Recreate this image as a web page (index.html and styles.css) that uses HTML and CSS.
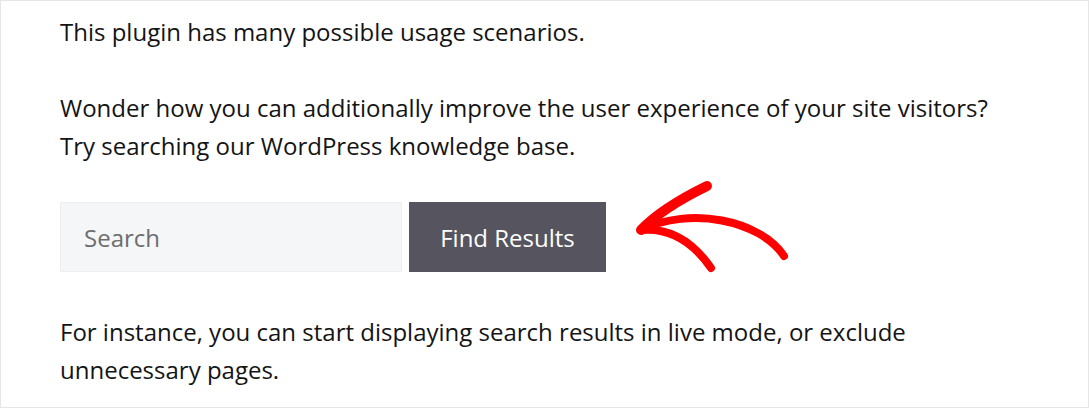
FILE: index.html
```html
<!DOCTYPE html>
<html lang="en">
<head>
<meta charset="utf-8">
<title>Search</title>
<link rel="stylesheet" href="styles.css">
</head>
<body>
<main class="frame">
  <div class="content">
    <p class="para">This plugin has many possible usage scenarios.</p>
    <p class="para">Wonder how you can additionally improve the user experience of your site visitors?<br>Try searching our WordPress knowledge base.</p>
    <form class="search-form">
      <input class="search-input" type="text" placeholder="Search">
      <button class="search-btn" type="button">Find Results</button>
    </form>
    <p class="para">For instance, you can start displaying search results in live mode, or exclude unnecessary pages.</p>
  </div>
  <svg class="arrow" width="200" height="110" viewBox="0 0 200 110" aria-hidden="true">
    <g fill="none" stroke="#ff0000" stroke-linecap="round" stroke-linejoin="round">
      <path d="M21 60 C 70 36, 140 50, 164 86" stroke-width="8"/>
      <path d="M21 60 Q 42 38 87 16" stroke-width="10"/>
      <path d="M21 60 Q 62 56 91 98" stroke-width="8"/>
    </g>
  </svg>
</main>
</body>
</html>
```

FILE: styles.css
```css
* { box-sizing: border-box; }
html, body { margin: 0; padding: 0; background: #ffffff; }
.frame {
  position: relative;
  width: 1089px;
  height: 408px;
  border: 1px solid #e6e6e6;
  padding: 12px 0 0 59px;
  font-family: "Open Sans", "Noto Sans", sans-serif;
  font-size: 24px;
  line-height: 38px;
  color: #141414;
  overflow: hidden;
}
.content { width: 965px; }
.para { margin: 0 0 38px; }
.search-form {
  display: flex;
  gap: 7px;
  margin: -1px 0 41px;
}
.search-input {
  width: 342px;
  height: 70px;
  border: 1px solid #eceef0;
  background: #f5f6f7;
  padding: 0 23px;
  font-family: inherit;
  font-size: 24px;
  color: #141414;
  outline: none;
}
.search-input::placeholder { color: #6d6d70; }
.search-btn {
  width: 197px;
  height: 70px;
  border: 0;
  background: #55545f;
  color: #ffffff;
  font-family: inherit;
  font-size: 24px;
}
.arrow {
  position: absolute;
  left: 619px;
  top: 169px;
}
```
